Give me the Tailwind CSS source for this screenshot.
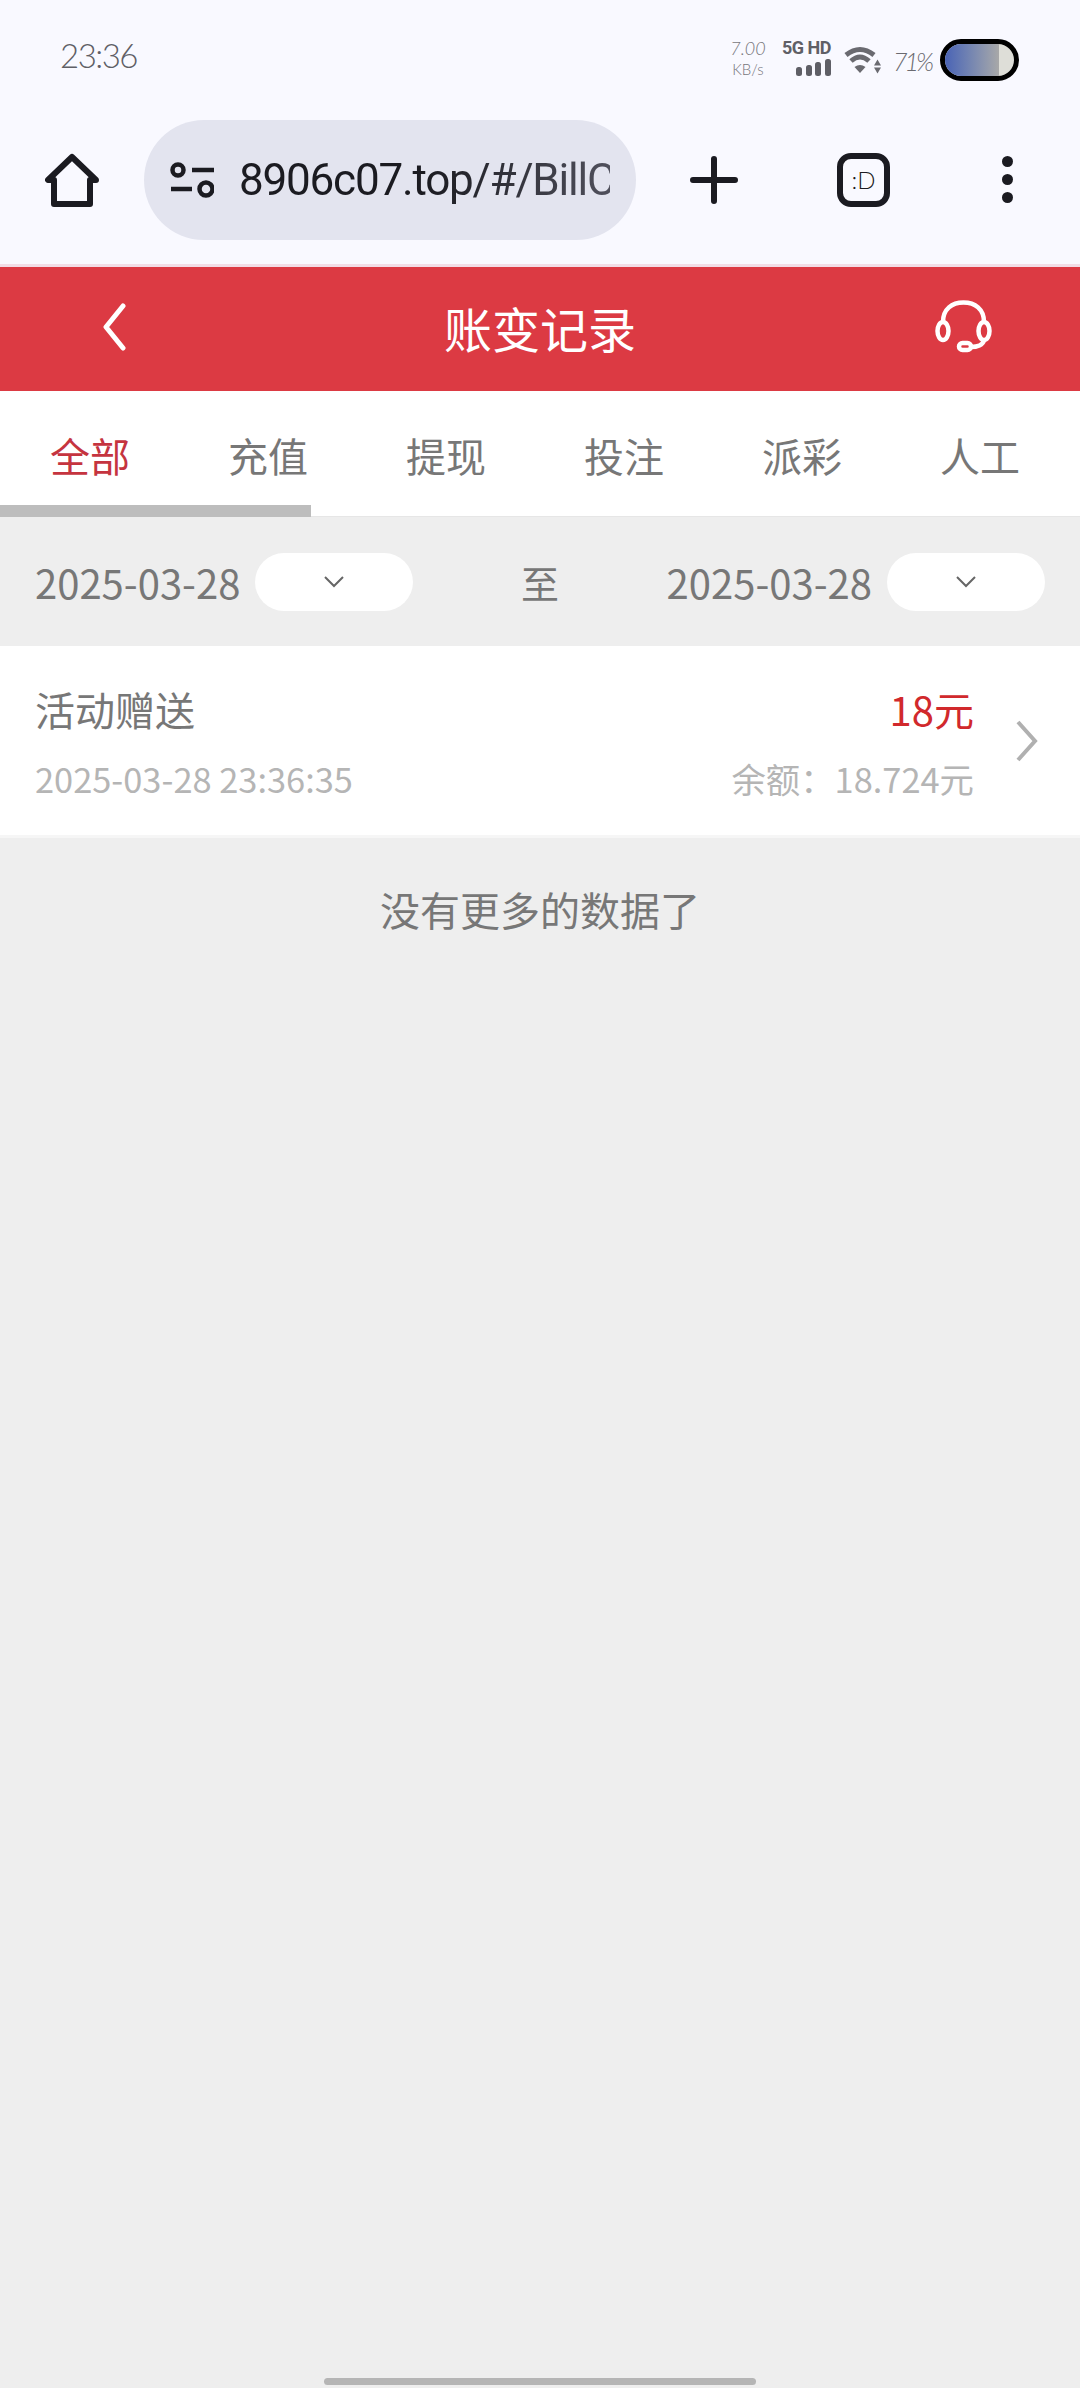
<!DOCTYPE html>
<html lang="zh">

<head>
    <meta charset="utf-8">
    <title>账变记录</title>
    <script src="https://cdn.jsdelivr.net/npm/@tailwindcss/browser@4"></script>
</head>

<body class="relative w-[1080px] h-[2388px] overflow-hidden bg-[#eeeeee] font-['Noto_Sans_CJK_SC','Noto_Sans',sans-serif]">

    <!-- status bar -->
    <div class="h-[112px] bg-[#f9f9ff] flex items-start justify-between pl-[60px] pr-[61px] pt-[37px]">
        <span class="text-[33px] leading-[36px] tracking-[-1.5px] text-[#5f5f66] font-['Lato',sans-serif] font-light">23:36</span>
        <div class="flex items-start">
            <div class="flex flex-col items-center w-[34px] mt-[1px] whitespace-nowrap text-[#77777c] font-['Lato',sans-serif] font-light">
                <span class="text-[18px] leading-[20px] italic">7.00</span>
                <span class="text-[15px] leading-[22px]">KB/s</span>
            </div>
            <div class="flex flex-col items-end w-[48px] ml-[18px] mt-[1px]">
                <span class="text-[18px] leading-[20px] font-bold whitespace-nowrap tracking-[-0.5px] text-[#5f5f66] font-['Roboto',sans-serif]">5G HD</span>
                <svg width="35" height="17" viewBox="0 0 35 17" class="mt-[1px]" fill="#5f5f66">
                    <rect x="0" y="8" width="6" height="9" rx="2.500" />
                    <rect x="10" y="6" width="6" height="11" rx="2.500" />
                    <rect x="19" y="3" width="6" height="14" rx="2.500" />
                    <rect x="29" y="0" width="6" height="17" rx="2.500" />
                </svg>
            </div>
            <svg width="37" height="28" viewBox="0 0 37 28" class="ml-[13px] mt-[9px]" fill="none" stroke="#6a6a70" stroke-width="5">
                <path d="M2 9 Q16 -2 30 9" />
                <path d="M7 15 Q16 7 25 15" />
                <path d="M10.500 21 Q16 17 21.500 21 L16 27Z" fill="#6a6a70" stroke="none" />
                <path d="M30 19.500h7l-3.500-6zM30 21.500h7l-3.500 6z" fill="#6a6a70" stroke="none" />
            </svg>
            <span class="ml-[12px] mt-[7px] w-[37px] whitespace-nowrap text-[25px] leading-[34px] tracking-[-3px] italic text-[#6a6a70] font-['Lato',sans-serif] font-light">71%</span>
            <div class="ml-[10px] mt-[2px] w-[79px] h-[42px] rounded-full border-[5px] border-black bg-[#deded8] overflow-hidden">
                <div class="w-[54px] h-full bg-linear-to-r from-[#4a63b5] to-[#a8a8a8]"></div>
            </div>
        </div>
    </div>

    <!-- browser toolbar -->
    <div class="h-[155px] bg-[#f9f9ff] border-b-[3px] border-[#f2dde6] flex items-start pt-[8px]">
        <svg width="54" height="54" viewBox="0 0 54 54" class="ml-[45px] mt-[33px]" fill="none" stroke="#1b1b21" stroke-width="6" stroke-linejoin="round" stroke-linecap="round">
            <path d="M27 4L3 27h6v24h36V27h6z" />
        </svg>
        <div class="ml-[45px] w-[492px] h-[120px] rounded-full bg-[#e3e4ef] flex items-center">
            <svg width="44" height="36" viewBox="0 0 44 36" class="ml-[26px]" fill="none" stroke="#1b1b21" stroke-width="4.500">
                <circle cx="8" cy="8" r="5.500" />
                <path d="M22 8h22M1 27h21" />
                <circle cx="36" cy="27" r="6.500" />
            </svg>
            <div class="ml-[25px] w-[371px] overflow-hidden whitespace-nowrap text-[44px] leading-[56px] tracking-[-1.2px] font-['Roboto',sans-serif] text-transparent bg-clip-text bg-linear-to-r from-[#1b1b21] from-[50%] to-[#50505c]">8906c07.top/#/BillC</div>
        </div>
        <svg width="48" height="48" viewBox="0 0 48 48" class="ml-[54px] mt-[36px]" fill="none" stroke="#1b1b21" stroke-width="6" stroke-linecap="round">
            <path d="M24 3v42M3 24h42" />
        </svg>
        <div class="ml-[99px] mt-[33px] w-[53px] h-[54px] rounded-[14px] border-[6px] border-[#1b1b21] flex items-center justify-center text-[24px] text-[#1b1b21] font-['Lato',sans-serif] font-light">:D</div>
        <div class="ml-[112px] mt-[36px] flex flex-col gap-[7px]">
            <span class="w-[11px] h-[11px] rounded-full bg-[#1b1b21]"></span>
            <span class="w-[11px] h-[11px] rounded-full bg-[#1b1b21]"></span>
            <span class="w-[11px] h-[11px] rounded-full bg-[#1b1b21]"></span>
        </div>
    </div>

    <!-- header -->
    <div class="h-[124px] bg-[#dc3a43] flex items-center">
        <div class="w-[280px] pl-[101px]">
            <svg width="26" height="48" viewBox="0 0 26 48" fill="none" stroke="#fff" stroke-width="5" stroke-linecap="round" stroke-linejoin="round" class="mt-[-5px]">
                <path d="M22 3L5 24l17 21" />
            </svg>
        </div>
        <span class="flex-1 text-center text-[48px] leading-[64px] text-white mt-[-4px]">账变记录</span>
        <div class="w-[280px] pr-[88px] flex justify-end">
            <svg width="57" height="54" viewBox="0 0 57 54" fill="none" stroke="#fff" stroke-width="4.500" class="mt-[-5px]">
                <path d="M8 22C8 9 17 2.500 28.500 2.500S49 9 49 22" />
                <ellipse cx="8" cy="31" rx="5.500" ry="9" />
                <ellipse cx="49" cy="31" rx="5.500" ry="9" />
                <path d="M49 40c-1 5-7 7-13 7" />
                <rect x="24" y="43" width="12" height="7" rx="3.500" />
            </svg>
        </div>
    </div>

    <!-- tabs -->
    <div class="relative h-[125px] bg-white flex pb-[3px]">
        <div class="ml-[1px] flex">
            <div class="w-[178px] h-[122px] pt-[6px] flex items-center justify-center text-[40px] text-[#c5343f]">全部</div>
            <div class="w-[178px] h-[122px] pt-[6px] flex items-center justify-center text-[40px] text-[#777777]">充值</div>
            <div class="w-[178px] h-[122px] pt-[6px] flex items-center justify-center text-[40px] text-[#777777]">提现</div>
            <div class="w-[178px] h-[122px] pt-[6px] flex items-center justify-center text-[40px] text-[#777777]">投注</div>
            <div class="w-[178px] h-[122px] pt-[6px] flex items-center justify-center text-[40px] text-[#777777]">派彩</div>
            <div class="w-[178px] h-[122px] pt-[6px] flex items-center justify-center text-[40px] text-[#777777]">人工</div>
        </div>
        <div class="absolute left-0 bottom-[-1px] w-[311px] h-[12px] bg-[#bdbdbd]"></div>
    </div>

    <!-- date filter -->
    <div class="h-[130px] border-t-[1px] border-[#e6e6e6] px-[35px] flex items-center justify-between text-[40px] text-[#777777]">
        <div class="flex items-center">
            <span class="leading-[58px]">2025-03-28</span>
            <div class="ml-[15px] w-[158px] h-[58px] rounded-full bg-white flex items-center justify-center">
                <svg width="20" height="12" viewBox="0 0 20 12" fill="none" stroke="#666" stroke-width="2">
                    <path d="M1 1l9 9 9-9" />
                </svg>
            </div>
        </div>
        <span class="text-[38px]">至</span>
        <div class="flex items-center">
            <span class="leading-[58px]">2025-03-28</span>
            <div class="ml-[15px] w-[158px] h-[58px] rounded-full bg-white flex items-center justify-center">
                <svg width="20" height="12" viewBox="0 0 20 12" fill="none" stroke="#666" stroke-width="2">
                    <path d="M1 1l9 9 9-9" />
                </svg>
            </div>
        </div>
    </div>

    <!-- record -->
    <div class="h-[192px] bg-white border-b-[3px] border-[#f6f6f6] pl-[35px] pr-[42px] flex items-center">
        <div class="flex-1 pt-[4px] flex flex-col gap-[17px]">
            <div class="flex justify-between items-center h-[56px]">
                <span class="text-[40px] text-[#777777]">活动赠送</span>
                <span class="text-[40px] text-[#d1292c]">18元</span>
            </div>
            <div class="flex justify-between items-center h-[50px]">
                <span class="text-[34.4px] text-[#b5b5b5]">2025-03-28 23:36:35</span>
                <span class="text-[34.4px] text-[#b5b5b5]">余额：18.724元</span>
            </div>
        </div>
        <svg width="24" height="42" viewBox="0 0 24 42" fill="none" stroke="#b0b0b0" stroke-width="4" class="ml-[40px]">
            <path d="M4 2l17 19L4 40" />
        </svg>
    </div>

    <p class="mt-[43px] text-center text-[40px] leading-[56px] text-[#777777]">没有更多的数据了</p>

    <!-- gesture bar -->
    <div class="absolute left-[324px] bottom-[3px] w-[432px] h-[7px] rounded-full bg-[#b5b5b5]"></div>

</body>

</html>
